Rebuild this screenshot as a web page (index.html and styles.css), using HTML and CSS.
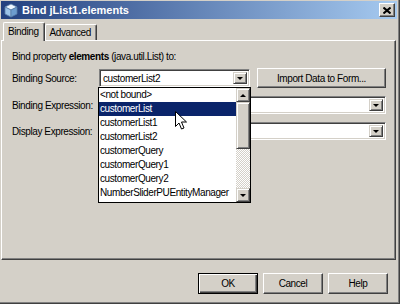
FILE: index.html
```html
<!DOCTYPE html>
<html lang="en">
<head>
  <meta charset="UTF-8" />
  <title>Bind jList1.elements</title>
  <link rel="stylesheet" href="styles.css">
</head>
<body>

  <div class="window">
    <div class="titlebar">
      <svg class="app-icon" width="14" height="15" viewBox="0 0 14 15">
        <polygon points="7,1 13,4 7,7 1,4" fill="#eef6ff" stroke="#5a7fa8" stroke-width="0.8"/>
        <polygon points="1,4 7,7 7,14 1,11" fill="#9cc3e8" stroke="#5a7fa8" stroke-width="0.8"/>
        <polygon points="13,4 7,7 7,14 13,11" fill="#6d9cce" stroke="#5a7fa8" stroke-width="0.8"/>
      </svg>
      <span class="title">Bind jList1.elements</span>
      <button class="close-btn" type="button">
        <svg width="8" height="7" viewBox="0 0 8 7">
          <path d="M0.5 0.5 L7.5 6.5 M7.5 0.5 L0.5 6.5" stroke="#000" stroke-width="2"/>
        </svg>
      </button>
    </div>

    <div class="tabs">
      <div class="tab active">Binding</div>
      <div class="tab">Advanced</div>
    </div>

    <div class="panel">
      <p class="intro">Bind property <b>elements</b> (java.util.List) to:</p>

      <div class="row">
        <label>Binding Source:</label>
        <div class="combo source">
          <span class="value">customerList2</span>
          <span class="arrow-btn"><i class="down"></i></span>

          <div class="dropdown">
            <ul class="items">
              <li>&lt;not bound&gt;</li>
              <li class="selected">customerList</li>
              <li>customerList1</li>
              <li>customerList2</li>
              <li>customerQuery</li>
              <li>customerQuery1</li>
              <li>customerQuery2</li>
              <li>NumberSliderPUEntityManager</li>
            </ul>
            <div class="scrollbar">
              <span class="arrow-btn"><i class="up"></i></span>
              <span class="thumb"></span>
              <span class="track"></span>
              <span class="arrow-btn"><i class="down"></i></span>
            </div>
          </div>

          <svg class="cursor" width="13" height="20" viewBox="0 0 13 20">
            <path d="M0.5 0.5 L0.5 15.5 L4 12 L6.5 18 L9 17 L6.5 11 L11.5 11 Z" fill="#fff" stroke="#000" stroke-width="1"/>
          </svg>
        </div>
        <button class="btn import" type="button">Import Data to Form...</button>
      </div>

      <div class="row">
        <label>Binding Expression:</label>
        <div class="combo wide">
          <span class="value"></span>
          <span class="arrow-btn"><i class="down"></i></span>
        </div>
      </div>

      <div class="row">
        <label>Display Expression:</label>
        <div class="combo wide">
          <span class="value"></span>
          <span class="arrow-btn"><i class="down"></i></span>
        </div>
      </div>
    </div>

    <div class="actions">
      <button class="btn default" type="button">OK</button>
      <button class="btn" type="button">Cancel</button>
      <button class="btn" type="button">Help</button>
    </div>
  </div>

</body>
</html>
```

FILE: styles.css
```css
* {
  box-sizing: border-box;
}

body {
  margin: 0;
  font-family: 'Liberation Sans', Arial, sans-serif;
  font-size: 10px;
  letter-spacing: -0.4px;
  color: #000;
  background: #d4d0c8;
}

.window {
  width: 400px;
  height: 304px;
  background: #d4d0c8;
  border-right: 1px solid #404040;
  border-bottom: 1px solid #404040;
  box-shadow: inset -1px -1px 0 #808080;
  padding: 1px 2px 0 1px;
  display: flex;
  flex-direction: column;
}

/* title bar */
.titlebar {
  height: 18px;
  display: flex;
  align-items: center;
  padding: 0 2px 0 3px;
  background: linear-gradient(to right, #23407f, #a6caf0);
}

.app-icon {
  margin-right: 4px;
}

.title {
  color: #fff;
  font-weight: bold;
  font-size: 11px;
  letter-spacing: 0;
  flex: 1;
}

.close-btn {
  width: 16px;
  height: 14px;
  padding: 0;
  display: flex;
  align-items: center;
  justify-content: center;
  background: #d4d0c8;
  border: 1px solid;
  border-color: #fff #404040 #404040 #fff;
  box-shadow: inset -1px -1px 0 #808080;
}

/* tabs */
.tabs {
  display: flex;
  align-items: flex-end;
  height: 20px;
  padding-left: 2px;
  margin-top: 1px;
}

.tab {
  height: 16px;
  padding: 2px 5px 0 4px;
  border: 1px solid;
  border-color: #fff #404040 transparent #fff;
  border-bottom: none;
  box-shadow: inset -1px 0 0 #808080;
  border-radius: 2px 2px 0 0;
}

.tab.active {
  height: 19px;
  padding-top: 3px;
  position: relative;
  z-index: 1;
  margin-bottom: -1px;
  background: #d4d0c8;
}

/* panel */
.panel {
  height: 220px;
  margin-right: 1px;
  border: 1px solid;
  border-color: #fff #404040 #404040 #fff;
  box-shadow: inset -1px -1px 0 #808080;
  padding: 9px 9px 0 10px;
}

.intro {
  margin: 0 0 5px 0;
  line-height: 14px;
}

.intro b {
  font-weight: bold;
}

.row {
  display: flex;
  align-items: center;
  height: 18px;
  margin-bottom: 8px;
}

.row:first-of-type {
  margin-bottom: 9px;
}

.row label {
  flex: none;
  width: 87px;
  white-space: nowrap;
}

.combo {
  position: relative;
  flex: none;
  height: 18px;
  display: flex;
  align-items: stretch;
  background: #fff;
  border: 1px solid;
  border-color: #808080 #fff #fff #808080;
  box-shadow: inset 1px 1px 0 #404040, inset -1px -1px 0 #d4d0c8;
  padding: 2px;
}

.combo.source {
  width: 151px;
}

.combo.wide {
  width: 287px;
}

.combo .value {
  flex: 1;
  padding-left: 1px;
  line-height: 13px;
}

.arrow-btn {
  width: 14px;
  display: flex;
  align-items: center;
  justify-content: center;
  background: #d4d0c8;
  border: 1px solid;
  border-color: #d4d0c8 #404040 #404040 #d4d0c8;
  box-shadow: inset 1px 1px 0 #fff, inset -1px -1px 0 #808080;
}

.down, .up {
  width: 0;
  height: 0;
  border-left: 3px solid transparent;
  border-right: 3px solid transparent;
}

.down {
  border-top: 3px solid #000;
}

.up {
  border-bottom: 3px solid #000;
}

/* dropdown list */
.dropdown {
  position: absolute;
  left: -2px;
  top: 17px;
  width: 153px;
  height: 116px;
  z-index: 5;
  display: flex;
  background: #fff;
  border: 1px solid #000;
}

.items {
  list-style: none;
  margin: 0;
  padding: 0;
  flex: 1;
  overflow: hidden;
}

.items li {
  height: 14px;
  line-height: 14px;
  padding-left: 1px;
  white-space: nowrap;
}

.items li.selected {
  background: #0a246a;
  color: #fff;
}

.scrollbar {
  width: 14px;
  flex: none;
  display: flex;
  flex-direction: column;
}

.scrollbar .arrow-btn {
  height: 14px;
}

.thumb {
  height: 47px;
  background: #d4d0c8;
  border: 1px solid;
  border-color: #d4d0c8 #404040 #404040 #d4d0c8;
  box-shadow: inset 1px 1px 0 #fff, inset -1px -1px 0 #808080;
}

.track {
  flex: 1;
  background-color: #ece9e4;
  background-image: repeating-conic-gradient(#fff 0 25%, #d4d0c8 0 50%);
  background-size: 2px 2px;
}

.cursor {
  position: absolute;
  left: 75px;
  top: 41px;
  z-index: 6;
}

/* buttons */
.btn {
  font-family: inherit;
  font-size: 10px;
  letter-spacing: inherit;
  background: #d4d0c8;
  color: #000;
  border: 1px solid;
  border-color: #fff #404040 #404040 #fff;
  box-shadow: inset -1px -1px 0 #808080;
  padding: 0;
}

.import {
  width: 129px;
  height: 20px;
  margin-left: 7px;
}

.actions {
  display: flex;
  justify-content: flex-end;
  gap: 5px;
  padding: 13px 9px 0 0;
}

.actions .btn {
  width: 60px;
  height: 21px;
}

.actions .default {
  border: 1px solid #000;
  box-shadow: inset 1px 1px 0 #fff, inset -1px -1px 0 #404040, inset -2px -2px 0 #808080;
}
```
